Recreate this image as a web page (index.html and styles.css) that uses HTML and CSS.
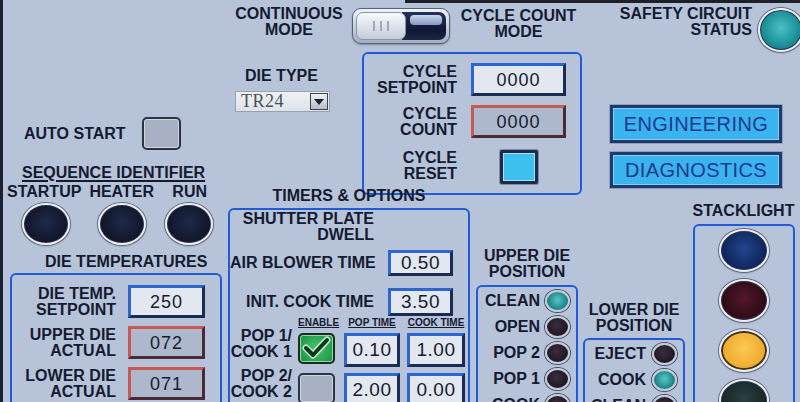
FILE: index.html
```html
<!DOCTYPE html>
<html>
<head>
<meta charset="utf-8">
<link rel="stylesheet" href="styles.css">
</head>
<body>
<div class="screen">
  <div class="col-a">
    <div class="auto-row"><span>AUTO START</span><div class="chk"></div></div>
    <div class="seq-title">SEQUENCE IDENTIFIER</div>
    <div class="seq-labels"><span>STARTUP</span><span class="heater">HEATER</span><span class="run">RUN</span></div>
    <div class="seq-lights">
      <div class="lamp big navy"></div>
      <div class="lamp big navy l2"></div>
      <div class="lamp big navy l3"></div>
    </div>
    <div class="dt-title">DIE TEMPERATURES</div>
    <div class="group temps">
      <div class="lbl">DIE TEMP.<br>SETPOINT</div><div class="field set">250</div>
      <div class="lbl">UPPER DIE<br>ACTUAL</div><div class="field act">072</div>
      <div class="lbl">LOWER DIE<br>ACTUAL</div><div class="field act">071</div>
    </div>
  </div>

  <div class="col-b">
    <div class="mode-row">
      <div class="mode-cont">CONTINUOUS<br>MODE</div>
      <div class="toggle">
        <div class="knob"><i></i><i></i><i></i></div>
        <div class="track"><span class="hl"></span></div>
      </div>
      <div class="mode-cycle">CYCLE COUNT<br>MODE</div>
    </div>
    <div class="mid-row">
      <div class="dietype">
        <div class="dt-lbl">DIE TYPE</div>
        <div class="select"><span>TR24</span><b></b></div>
      </div>
      <div class="group cycle">
        <div class="lbl">CYCLE<br>SETPOINT</div><div class="field set">0000</div>
        <div class="lbl">CYCLE<br>COUNT</div><div class="field act">0000</div>
        <div class="lbl r3">CYCLE<br>RESET</div><div class="reset r3"></div>
      </div>
    </div>
    <div class="low-row">
      <div class="timers-col">
        <div class="timers-title">TIMERS &amp; OPTIONS</div>
        <div class="group timers">
          <div class="shutter">SHUTTER PLATE<br>DWELL</div>
          <div class="trow t1"><div class="tlbl">AIR BLOWER TIME</div><div class="field set tf">0.50</div></div>
          <div class="trow t2"><div class="tlbl">INIT. COOK TIME</div><div class="field set tf">3.50</div></div>
          <div class="phead"><span class="pl"></span><span class="pc">ENABLE</span><span class="pf1">POP TIME</span><span class="pf2">COOK TIME</span></div>
          <div class="prow">
            <div class="pl plbl">POP 1/<br>COOK 1</div>
            <div class="pc chk on"><svg viewBox="0 0 33 27" width="33" height="27"><path d="M6 13 L13 20 L27 5" fill="none" stroke="#bfe8c8" stroke-width="7" stroke-linecap="round" stroke-linejoin="round"/><path d="M6 13 L13 20 L27 5" fill="none" stroke="#0c3a1b" stroke-width="4" stroke-linecap="round" stroke-linejoin="round"/></svg></div>
            <div class="pf1 field set tf">0.10</div>
            <div class="pf2 field set tf">1.00</div>
          </div>
          <div class="prow p2">
            <div class="pl plbl">POP 2/<br>COOK 2</div>
            <div class="pc chk"></div>
            <div class="pf1 field set tf">2.00</div>
            <div class="pf2 field set tf">0.00</div>
          </div>
        </div>
      </div>
      <div class="upper-col">
        <div class="pos-title">UPPER DIE<br>POSITION</div>
        <div class="group upper">
          <div class="ind-row"><span>CLEAN</span><i class="ind teal"></i></div>
          <div class="ind-row"><span>OPEN</span><i class="ind dark"></i></div>
          <div class="ind-row"><span>POP 2</span><i class="ind dark"></i></div>
          <div class="ind-row"><span>POP 1</span><i class="ind dark"></i></div>
          <div class="ind-row"><span>COOK</span><i class="ind dark"></i></div>
        </div>
      </div>
    </div>
  </div>

  <div class="col-c">
    <div class="safety-row">
      <div class="safety-text">SAFETY CIRCUIT<br>STATUS</div>
      <div class="lamp safety"></div>
    </div>
    <div class="btn eng">ENGINEERING</div>
    <div class="btn diag">DIAGNOSTICS</div>
    <div class="c-low">
      <div class="lower-col">
        <div class="lpos-title">LOWER DIE<br>POSITION</div>
        <div class="group lower">
          <div class="ind-row"><span>EJECT</span><i class="ind dark"></i></div>
          <div class="ind-row"><span>COOK</span><i class="ind teal"></i></div>
          <div class="ind-row"><span>CLEAN</span><i class="ind dark"></i></div>
        </div>
      </div>
      <div class="stack-col">
        <div class="stack-title">STACKLIGHT</div>
        <div class="group stack">
          <div class="lamp sl blue"></div>
          <div class="lamp sl red"></div>
          <div class="lamp sl yellow"></div>
          <div class="lamp sl green"></div>
        </div>
      </div>
    </div>
  </div>
</div>
</body>
</html>
```

FILE: styles.css
```css
* { box-sizing: border-box; }
body { margin: 0; background: #b6c3d9; }

.screen {
  width: 800px; height: 402px; overflow: hidden; display: flex;
  background: linear-gradient(to right, transparent 405px, #1d2029 405px) top left / 100% 3px no-repeat, #b6c3d9;
  box-shadow: inset 3px 0 0 #1a2133;
  font-family: "Liberation Sans", Arial, sans-serif;
  font-weight: bold; font-size: 16px; line-height: 16px; color: #141a30;
  white-space: nowrap;
}

.group { border: 2px solid #1f5cd6; border-radius: 6px; }

/* lamps */
.lamp {
  border-radius: 50%; flex: none;
  border: 2px solid #e9edf3;
  box-shadow: 0 0 0 1px #5f687c, 0 1px 2px rgba(0,0,0,.35), inset 0 0 0 1px #2c3346;
}
.lamp.big { width: 48px; height: 42px; }
.navy { background: radial-gradient(circle at 50% 45%, #1f2947, #0e1429 75%); }
.safety { width: 46px; height: 44px; margin: 8px 0 0 6px; background: radial-gradient(circle at 50% 45%, #48c2c4, #1b8d96 60%, #0f5e68); }
.sl { width: 50px; height: 43px; }
.blue { background: radial-gradient(circle at 50% 45%, #21458f, #0f2155 75%); }
.red { background: radial-gradient(circle at 50% 45%, #52172a, #2c0a15 75%); }
.yellow { background: radial-gradient(circle at 50% 45%, #fcca52, #eea52a 75%); box-shadow: 0 0 0 1px #5f687c, 0 1px 2px rgba(0,0,0,.35), inset 0 0 0 2px #3d3420; }
.green { background: radial-gradient(circle at 50% 45%, #2c3f42, #162426 75%); }

.ind { display: block; width: 25px; height: 22px; border-radius: 50%; flex: none; border: 2px solid #c3cad8; box-shadow: 0 0 0 1px #454d62; }
.ind.dark { background: radial-gradient(circle at 45% 40%, #3b2d3f, #1c1522 75%); }
.ind.teal { background: radial-gradient(circle at 50% 45%, #56c8c6, #1d8488 65%, #105458); }

/* fields */
.field {
  display: flex; align-items: center; justify-content: center;
  font-weight: normal; font-size: 18px; letter-spacing: 1px; color: #161c30;
  border: 3px solid;
}
.field.set { background: #e2e7f0; border-color: #2d66cf #1a2b55 #1a2b55 #2d66cf; }
.field.act { background: #adb8cc; border-color: #c65a52 #4a2a36 #4a2a36 #c65a52; }
.field.tf { font-size: 19px; letter-spacing: 0.5px; }

.chk { width: 39px; height: 33px; border-radius: 5px; background: #a7b1c3; border: 2px solid #2b3347; box-shadow: inset 0 0 0 1px #cfd5df; flex: none; }
.chk.on { background: radial-gradient(circle, #4cc673, #1f9a4a 80%); border-color: #1d2a22; box-shadow: inset 0 0 0 1px #8edca6; display: flex; align-items: center; justify-content: center; }

/* column A */
.col-a { width: 225px; flex: none; display: flex; flex-direction: column; }
.auto-row { margin-top: 117px; padding-left: 24px; display: flex; align-items: center; gap: 16px; height: 33px; }
.seq-title { margin-top: 15px; padding-left: 22px; text-decoration: underline; text-decoration-thickness: 2px; text-underline-offset: 2px; }
.seq-labels { margin-top: 3px; display: flex; padding: 0 18px 0 7px; }
.seq-labels .heater { margin-left: 8px; }
.seq-labels .run { margin-left: auto; }
.seq-lights { margin-top: 3px; display: flex; padding-left: 22px; }
.seq-lights .l2 { margin-left: 28px; }
.seq-lights .l3 { margin-left: 19px; }
.dt-title { margin-top: 9px; padding-left: 45px; }
.temps {
  margin: 3px 0 0 10px; width: 212px; height: 140px; flex: none;
  padding-top: 10px;
  display: grid; grid-template-columns: 104px 77px; grid-auto-rows: 33px;
  column-gap: 12px; row-gap: 8px; align-content: start;
}
.lbl { text-align: right; align-self: center; }

/* column B */
.col-b { width: 358px; flex: none; display: flex; flex-direction: column; }
.mode-row { height: 52px; display: flex; align-items: flex-start; flex: none; }
.mode-cont { margin: 6px 0 0 10px; width: 108px; text-align: center; }
.mode-cycle { margin: 8px 0 0 10px; width: 117px; text-align: center; }
.toggle {
  margin: 8px 0 0 9px; width: 98px; height: 36px; display: flex; padding: 3px;
  border-radius: 9px; background: linear-gradient(#f0f3f8, #a3aec2);
  border: 1px solid #56627a; box-shadow: 0 1px 2px rgba(0,0,0,.3);
}
.knob {
  width: 50px; flex: none; border-radius: 7px; position: relative; z-index: 1;
  background: linear-gradient(#f7f9fc, #c5ccd9); border: 1px solid #8a94a8;
  display: flex; justify-content: center; align-items: center; gap: 5px;
}
.knob i { display: block; width: 2px; height: 10px; background: #a0aabb; }
.track {
  flex: 1; margin-left: -4px; padding: 3px 4px 0 8px; border-radius: 0 7px 7px 0;
  background: linear-gradient(#24335e, #0f1733 65%, #1c2848);
}
.track .hl { display: block; height: 10px; border-radius: 4px; background: linear-gradient(#cbd6ea, #8799c2); }

.mid-row { display: flex; height: 143px; flex: none; }
.dietype { width: 137px; flex: none; }
.dt-lbl { margin-top: 16px; padding-left: 20px; }
.select { margin: 7px 0 0 10px; width: 95px; height: 21px; display: flex; background: linear-gradient(#eef1f4, #dfe4ea); border: 1px solid #98a1b0; }
.select span { flex: 1; font: normal 18px/19px "Liberation Serif", "Times New Roman", serif; letter-spacing: 0.5px; color: #4a505c; padding-left: 5px; }
.select b { width: 18px; margin: 1px; background: linear-gradient(#eef1f5, #b4bcc8); border: 1px solid #3a4252; display: flex; align-items: center; justify-content: center; }
.select b::after { content: ""; border-left: 5px solid transparent; border-right: 5px solid transparent; border-top: 6px solid #1d2230; }

.cycle {
  width: 220px; height: 143px; flex: none; padding-top: 9px;
  display: grid; grid-template-columns: 95px 95px; grid-template-rows: 33px 33px 34px;
  column-gap: 12px; row-gap: 9px; align-content: start;
}
.cycle .lbl { padding-right: 2px; }
.cycle .r3 { margin-top: 3px; }
.reset {
  justify-self: center; width: 38px; height: 34px;
  background: #3dc0f0; border: 3px solid #1c2b4a; border-radius: 2px;
  box-shadow: inset 0 0 0 1px #a6e2f8, 0 0 0 1px #7d8aa3;
}

.low-row { display: flex; margin-top: -7px; flex: 1; min-height: 0; }
.timers-col { margin-left: 3px; width: 242px; flex: none; display: flex; flex-direction: column; }
.timers-title { text-align: center; height: 20px; flex: none; }
.timers { height: 220px; flex: none; padding-top: 1px; }
.shutter { width: 144px; text-align: right; }
.trow { display: flex; align-items: center; }
.trow.t1 { margin-top: 7px; height: 26px; }
.trow.t2 { margin-top: 12px; height: 28px; }
.tlbl { width: 144px; text-align: right; }
.trow .field { margin-left: 14px; width: 65px; height: 100%; }
.phead, .prow { display: flex; }
.phead { margin-top: 1px; height: 11px; font-size: 10px; line-height: 11px; }
.phead span { text-align: center; text-decoration: underline; text-decoration-thickness: 1px; text-underline-offset: 1px; }
.pl { width: 62px; flex: none; }
.pc { width: 37px; flex: none; margin-left: 6px; }
.pf1 { width: 56px; flex: none; margin-left: 9px; }
.pf2 { width: 58px; flex: none; margin-left: 7px; }
.prow { margin-top: 5px; height: 34px; align-items: flex-start; }
.prow.p2 { margin-top: 6px; }
.prow .chk { height: 31px; }
.prow .field { height: 34px; }
.plbl { text-align: right; margin-top: -5px; }

.upper-col { margin-left: 6px; width: 102px; flex: none; display: flex; flex-direction: column; }
.pos-title { margin-top: 60px; text-align: center; }
.upper { margin-top: 5px; height: 140px; flex: none; padding: 3px 6px 0 0; display: flex; flex-direction: column; gap: 4px; }
.ind-row { display: flex; justify-content: flex-end; align-items: center; height: 22px; gap: 5px; flex: none; }

/* column C */
.col-c { width: 217px; flex: none; display: flex; flex-direction: column; }
.safety-row { height: 52px; display: flex; flex: none; padding-left: 35px; }
.safety-text { width: 134px; flex: none; text-align: right; margin-top: 6px; }
.btn {
  margin-left: 27px; width: 172px; flex: none;
  display: flex; align-items: center; justify-content: center;
  background: #3ab3ee; border: 3px solid #21396b;
  box-shadow: 0 0 0 1px #8ea0c0, inset 0 0 0 1px #7fd0f5;
  color: #1e3a8c; font-weight: normal; font-size: 20px; letter-spacing: 0.4px;
}
.eng { margin-top: 53px; height: 38px; }
.diag { margin-top: 9px; height: 36px; }
.c-low { display: flex; flex: 1; min-height: 0; }
.lower-col { width: 102px; flex: none; display: flex; flex-direction: column; }
.lpos-title { margin-top: 114px; text-align: center; }
.lower { margin-top: 4px; height: 100px; flex: none; padding: 2px 6px 0 0; display: flex; flex-direction: column; gap: 3px; }
.lower .ind-row { height: 23px; gap: 6px; }
.stack-col { margin-left: 7px; width: 103px; flex: none; display: flex; flex-direction: column; }
.stack-title { margin-top: 15px; text-align: center; }
.stack { margin: 5px 0 0 1px; width: 102px; height: 220px; flex: none; padding-top: 3px; display: flex; flex-direction: column; align-items: center; gap: 7px; }
```
